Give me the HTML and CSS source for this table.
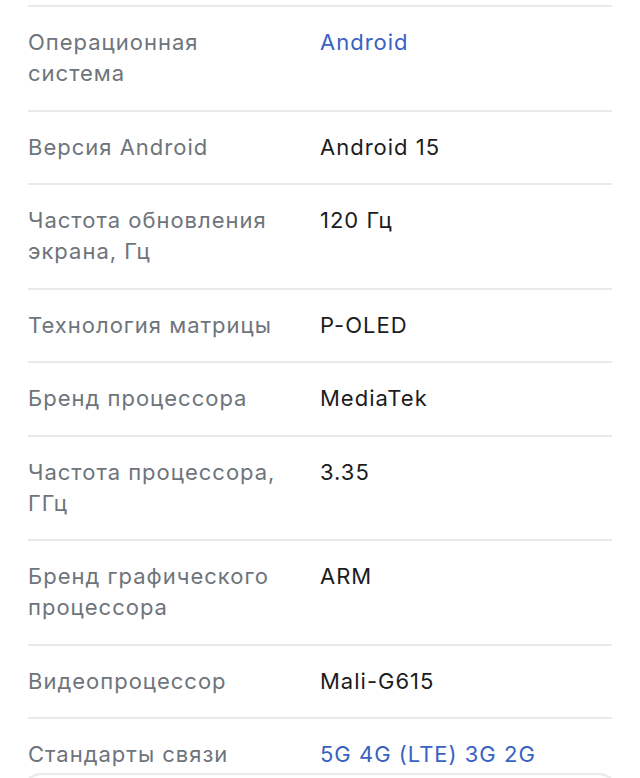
FILE: index.html
```html
<!DOCTYPE html>
<html lang="ru">
<head>
    <meta charset="UTF-8">
    <meta name="viewport" content="width=device-width, initial-scale=1.0">
    <title>Характеристики</title>
    <link rel="stylesheet" href="styles.css">
</head>
<body>
    <div class="page">
        <div class="specs">
            <div class="spec-row">
                <div class="spec-label">Операционная система</div>
                <div class="spec-value link">Android</div>
            </div>
            <div class="spec-row">
                <div class="spec-label">Версия Android</div>
                <div class="spec-value">Android 15</div>
            </div>
            <div class="spec-row">
                <div class="spec-label">Частота обновления экрана, Гц</div>
                <div class="spec-value">120 Гц</div>
            </div>
            <div class="spec-row">
                <div class="spec-label">Технология матрицы</div>
                <div class="spec-value">P-OLED</div>
            </div>
            <div class="spec-row">
                <div class="spec-label">Бренд процессора</div>
                <div class="spec-value">MediaTek</div>
            </div>
            <div class="spec-row">
                <div class="spec-label">Частота процессора, ГГц</div>
                <div class="spec-value">3.35</div>
            </div>
            <div class="spec-row">
                <div class="spec-label">Бренд графического процессора</div>
                <div class="spec-value">ARM</div>
            </div>
            <div class="spec-row">
                <div class="spec-label">Видеопроцессор</div>
                <div class="spec-value">Mali-G615</div>
            </div>
            <div class="spec-row last">
                <div class="spec-label">Стандарты связи</div>
                <div class="spec-value link">5G 4G (LTE) 3G 2G</div>
            </div>
        </div>
        <div class="next-card"></div>
    </div>
</body>
</html>
```

FILE: styles.css
```css
html, body {
    margin: 0;
    padding: 0;
    height: 100%;
    overflow: hidden;
}

body {
    background: #ffffff;
    font-family: Inter, Roboto, "Noto Sans", sans-serif;
}

.page {
    height: 100%;
    overflow: hidden;
}

.specs {
    margin: 0 28px;
    padding-top: 5px;
}

.spec-row {
    display: grid;
    grid-template-columns: 262px 1fr;
    column-gap: 30px;
    padding: 20px 0 20.5px;
    border-top: 2px solid #e8e9eb;
    font-size: 22px;
    line-height: 31px;
    letter-spacing: 1px;
}

.spec-row.last {
    padding-bottom: 0;
}

.spec-label {
    color: #6e747b;
}

.spec-value {
    color: #1b1c1e;
}

.spec-value.link {
    color: #3a62c3;
}

.next-card {
    margin: 3px 20px 0;
    height: 40px;
    border: 2px solid #e9eaec;
    border-radius: 26px;
}
```
